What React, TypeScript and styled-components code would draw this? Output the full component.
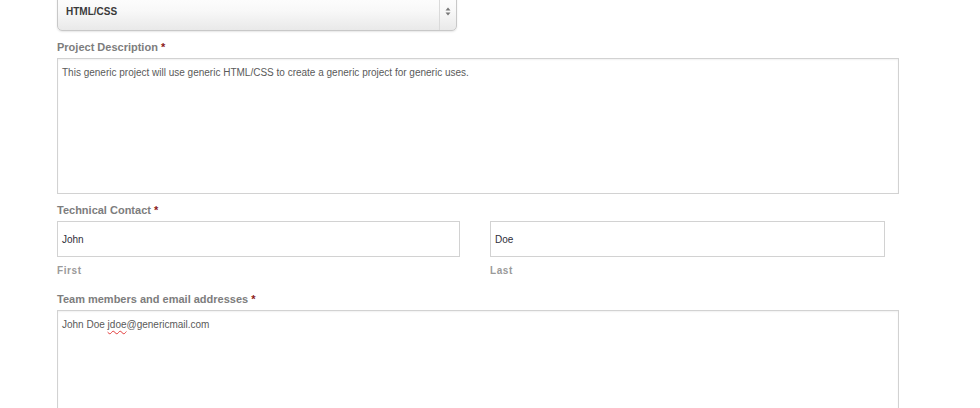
import styled, { createGlobalStyle } from 'styled-components';

const GlobalStyle = createGlobalStyle`
  html, body {
    margin: 0;
    padding: 0;
    background: #ffffff;
    overflow: hidden;
  }
  body {
    font-family: 'Liberation Sans', Arial, Helvetica, sans-serif;
  }
`;

function App() {
  return (
    <>
      <GlobalStyle />
      <Form>
        <SelectBox>
          <SelectValue>HTML/CSS</SelectValue>
          <SelectArrow>
            <svg width="6" height="9" viewBox="0 0 6 9">
              <path d="M3 0.5 L5.5 3.5 H0.5 Z" fill="#777" />
              <path d="M3 8.5 L5.5 5.5 H0.5 Z" fill="#777" />
            </svg>
          </SelectArrow>
        </SelectBox>

        <Label>
          Project Description <Required>*</Required>
        </Label>
        <TextArea height={136}>
          This generic project will use generic HTML/CSS to create a generic project for generic uses.
        </TextArea>

        <Label>
          Technical Contact <Required>*</Required>
        </Label>
        <NameRow>
          <NameField>
            <TextInput>John</TextInput>
            <SubLabel>First</SubLabel>
          </NameField>
          <NameField>
            <TextInput>Doe</TextInput>
            <SubLabel>Last</SubLabel>
          </NameField>
        </NameRow>

        <Label>
          Team members and email addresses <Required>*</Required>
        </Label>
        <TextArea height={120}>
          John Doe <Misspelled>jdoe</Misspelled>@genericmail.com
        </TextArea>
      </Form>
    </>
  );
}

// style
const Form = styled.div`
  display: flex;
  flex-direction: column;
  align-items: flex-start;
  width: 842px;
  margin: -9px 0 0 57px;
`;

const SelectBox = styled.div`
  display: flex;
  align-items: center;
  box-sizing: border-box;
  width: 400px;
  height: 40px;
  border: 1px solid #c8c8c8;
  border-radius: 5px;
  background: linear-gradient(#ffffff 0%, #f8f8f8 50%, #e9e9e9 100%);
  box-shadow: 0 1px 2px rgba(0, 0, 0, 0.1);
`;

const SelectValue = styled.span`
  flex: 1;
  padding-left: 8px;
  font-size: 10px;
  font-weight: bold;
  color: #3a3a3a;
`;

const SelectArrow = styled.span`
  display: flex;
  align-items: center;
  justify-content: center;
  width: 16px;
  align-self: stretch;
  border-left: 1px solid #dadada;
`;

const Label = styled.div`
  margin-top: 9px;
  margin-bottom: 4px;
  font-size: 11px;
  line-height: 14px;
  font-weight: bold;
  color: #7d7d7d;
`;

const Required = styled.span`
  color: #8b1a1a;
`;

const TextArea = styled.div<{ height: number }>`
  box-sizing: border-box;
  width: 842px;
  height: ${({ height }) => height}px;
  padding: 7px 4px;
  border: 1px solid #d2d2d2;
  box-shadow: inset 0 1px 2px rgba(0, 0, 0, 0.06);
  font-size: 10px;
  line-height: 14px;
  color: #5a5a5a;
`;

const Misspelled = styled.span`
  text-decoration: underline wavy #e23b3b;
  text-decoration-thickness: 1px;
  text-underline-offset: 2px;
`;

const NameRow = styled.div`
  display: flex;
  gap: 30px;
  margin-bottom: 5px;
`;

const NameField = styled.div`
  display: flex;
  flex-direction: column;
  width: 403px;

  &:last-child {
    width: 395px;
  }
`;

const TextInput = styled.div`
  display: flex;
  align-items: center;
  box-sizing: border-box;
  height: 36px;
  padding-left: 4px;
  border: 1px solid #d2d2d2;
  font-size: 10px;
  color: #2e2e3a;
`;

const SubLabel = styled.div`
  margin-top: 7px;
  font-size: 10px;
  line-height: 14px;
  font-weight: bold;
  letter-spacing: 0.6px;
  color: #9a9a9a;
`;

export default App;
